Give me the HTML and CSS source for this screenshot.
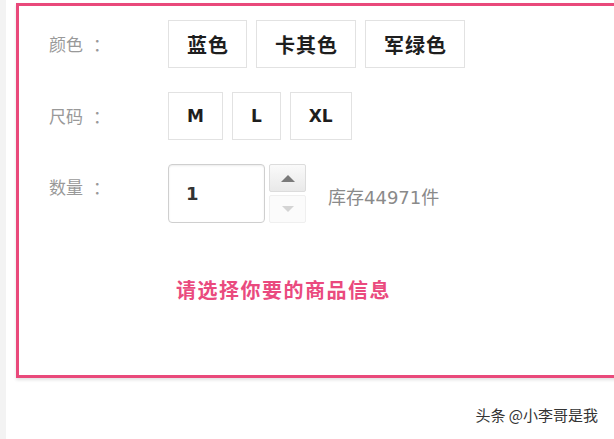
FILE: index.html
```html
<!DOCTYPE html>
<html lang="zh-CN">
<head>
<meta charset="utf-8">
<title>商品选择</title>
<link rel="stylesheet" href="styles.css">
</head>
<body>
<div class="page">
  <div class="gutter"></div>
  <div class="main">
    <div class="box">
      <div class="row">
        <div class="label">颜色<span class="colon">：</span></div>
        <div class="options">
          <span class="opt cjk">蓝色</span>
          <span class="opt cjk">卡其色</span>
          <span class="opt cjk">军绿色</span>
        </div>
      </div>
      <div class="row">
        <div class="label">尺码<span class="colon">：</span></div>
        <div class="options">
          <span class="opt latin">M</span>
          <span class="opt latin">L</span>
          <span class="opt latin">XL</span>
        </div>
      </div>
      <div class="row row-qty">
        <div class="label label-qty">数量<span class="colon">：</span></div>
        <div class="qty">
          <div class="qty-input">1</div>
          <div class="spin">
            <span class="spin-btn spin-up"><span class="arrow-up"></span></span>
            <span class="spin-btn spin-down"><span class="arrow-down"></span></span>
          </div>
          <div class="stock">库存44971件</div>
        </div>
      </div>
      <div class="msg">请选择你要的商品信息</div>
    </div>
    <div class="footer">头条 @小李哥是我</div>
  </div>
</div>
</body>
</html>
```
FILE: styles.css
```css
html, body {
  margin: 0;
  padding: 0;
  background: #fff;
  overflow: hidden;
  width: 614px;
  height: 439px;
}
.page {
  display: flex;
  height: 439px;
  font-family: "Noto Sans CJK SC", sans-serif;
}
.gutter {
  width: 6px;
  flex: none;
  background: #f3f3f3;
}
.main {
  flex: 1;
  padding: 3px 0 0 10px;
  display: flex;
  flex-direction: column;
  min-width: 0;
  overflow: hidden;
}
.box {
  margin-right: -4px;
  height: 375px;
  box-sizing: border-box;
  border: 3px solid #e9497b;
  border-right: none;
  box-shadow: 0 2px 3px rgba(0, 0, 0, 0.12);
  padding: 14px 0 0 30px;
  display: flex;
  flex-direction: column;
  gap: 24px;
}
.row {
  display: flex;
  align-items: center;
}
.row-qty {
  align-items: flex-start;
}
.label {
  width: 119px;
  flex: none;
  font-size: 17px;
  color: #999;
  line-height: 24px;
}
.colon {
  margin-left: 10px;
}
.label-qty {
  padding-top: 11px;
}
.options {
  display: flex;
  gap: 9px;
}
.opt {
  height: 48px;
  box-sizing: border-box;
  border: 1px solid #e2e2e2;
  padding: 0 18px;
  display: flex;
  align-items: center;
  justify-content: center;
  color: #1e1e1e;
  font-weight: bold;
}
.opt.cjk {
  font-size: 20px;
  letter-spacing: 1px;
  padding: 0 17px 0 18px;
}
.opt.latin {
  font-family: "DejaVu Sans", sans-serif;
  font-size: 17px;
}
.qty {
  display: flex;
  align-items: center;
}
.qty-input {
  width: 97px;
  height: 59px;
  box-sizing: border-box;
  border: 1px solid #cfcfcf;
  border-radius: 4px;
  box-shadow: inset 0 1px 2px rgba(0, 0, 0, 0.08);
  padding-left: 17px;
  display: flex;
  align-items: center;
  font-family: "DejaVu Sans", sans-serif;
  font-weight: bold;
  font-size: 18px;
  color: #333;
}
.spin {
  display: flex;
  flex-direction: column;
  gap: 3px;
  margin-left: 4px;
}
.spin-btn {
  width: 37px;
  height: 28px;
  box-sizing: border-box;
  display: flex;
  align-items: center;
  justify-content: center;
  border-radius: 2px;
}
.spin-up {
  border: 1px solid #dcdcdc;
  background: linear-gradient(#fafafa, #e9e9e9);
}
.spin-down {
  border: 1px solid #efefef;
  background: #fbfbfb;
}
.arrow-up {
  width: 0;
  height: 0;
  border-left: 7px solid transparent;
  border-right: 7px solid transparent;
  border-bottom: 7px solid #7a7a7a;
}
.arrow-down {
  width: 0;
  height: 0;
  border-left: 6px solid transparent;
  border-right: 6px solid transparent;
  border-top: 6px solid #d4d4d4;
}
.stock {
  margin-left: 22px;
  font-family: "DejaVu Sans", "Noto Sans CJK SC", sans-serif;
  font-size: 18px;
  color: #8a8a8a;
  margin-top: 4px;
}
.msg {
  margin: 28px 0 0 127px;
  font-size: 20px;
  line-height: 30px;
  font-weight: bold;
  color: #ea4a7e;
  letter-spacing: 1.5px;
}
.footer {
  align-self: flex-end;
  margin: 27px 16px 0 0;
  font-size: 15px;
  line-height: 20px;
  color: #333;
}
```
